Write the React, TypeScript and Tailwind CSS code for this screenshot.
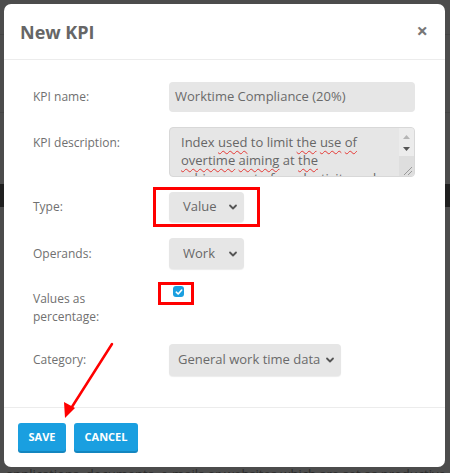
import React from "react";

const Chevron = () => (
  <svg width="10" height="10" viewBox="0 0 10 10" className="shrink-0">
    <path d="M2 3.5 L5 6.5 L8 3.5" fill="none" stroke="#555" strokeWidth="1.8" strokeLinecap="round" strokeLinejoin="round" />
  </svg>
);

const Wavy = ({ children }: { children: React.ReactNode }) => (
  <span className="underline decoration-wavy decoration-[#e53935] decoration-1 underline-offset-[3px]">{children}</span>
);

export default function App() {
  return (
    <div
      className="relative w-[450px] h-[473px] overflow-hidden bg-[#4c4c4c]"
      style={{ fontFamily: '"Open Sans", "Liberation Sans", sans-serif' }}
    >
      {/* background page hints */}
      <div className="absolute left-0 top-[34px] w-full h-px bg-[#444]" />
      <div className="absolute left-0 top-[112px] w-full h-px bg-[#444]" />
      <div className="absolute left-0 top-[184px] w-full h-[23px] bg-[#1f1f1f]" />
      <div className="absolute top-[466px] left-[6px] text-[13px] leading-[16px] text-[#2a2a2a] whitespace-nowrap">
        applications, documents, e-mails or websites which are set as productive comp
      </div>

      {/* modal */}
      <div className="absolute left-[4px] top-[4px] w-[441px] h-[463px] bg-white rounded-[7px] flex flex-col">
        <div className="h-[56px] shrink-0 flex items-center justify-between pl-[16px] pr-[17px] border-b border-[#ececec]">
          <div className="text-[18px] font-bold text-[#666] pt-[1px]">New KPI</div>
          <div className="text-[20px] font-bold text-[#777] leading-none -mt-[2px]">×</div>
        </div>

        <div className="flex-1 flex flex-col pl-[29px] text-[12px] text-[#707070]">
          {/* KPI name */}
          <div className="flex mt-[22px] h-[30px] items-center">
            <div className="w-[136px]">KPI name:</div>
            <div className="w-[246px] h-[30px] rounded-[4px] bg-[#e6e6e6] flex items-center pl-[6px] text-[13px] text-[#6a6a6a]">
              Worktime Compliance (20%)
            </div>
          </div>

          {/* KPI description */}
          <div className="flex mt-[15px]">
            <div className="w-[136px] pt-[7px]">KPI description:</div>
            <div className="relative w-[246px] h-[50px] rounded-[4px] bg-[#e6e6e6] border border-[#d8d8d8] overflow-hidden">
              <div className="pl-[11px] pr-[20px] pt-[5px] text-[13px] leading-[18px] text-[#666]">
                Index <Wavy>used</Wavy> to limit <Wavy>the</Wavy> <Wavy>use</Wavy> <Wavy>of</Wavy>
                <br />
                <Wavy>overtime</Wavy> <Wavy>aiming</Wavy> at <Wavy>the</Wavy>
                <br />
                <Wavy>achievement</Wavy> of productivity and
              </div>
              <div className="absolute right-0 top-0 w-[15px] h-full bg-[#ececec] flex flex-col items-center">
                <svg width="15" height="13" viewBox="0 0 15 13" className="mt-[2px]">
                  <path d="M4 9 L7.5 5 L11 9 Z" fill="#b5b5b5" />
                </svg>
                <svg width="15" height="13" viewBox="0 0 15 13">
                  <path d="M4 4 L7.5 8 L11 4 Z" fill="#555" />
                </svg>
                <div className="flex-1 w-full bg-[#dedede] relative">
                  <svg width="15" height="12" viewBox="0 0 15 12" className="absolute right-0 bottom-0">
                    <path d="M13 3 L5 11 M13 7 L9 11" stroke="#999" strokeWidth="1" />
                  </svg>
                </div>
              </div>
            </div>
          </div>

          {/* Type */}
          <div className="flex mt-[15px] h-[30px] items-center">
            <div className="w-[136px]">Type:</div>
            <div className="relative">
              <div className="w-[75px] h-[30px] rounded-[4px] bg-[#e6e6e6] flex items-center justify-between pl-[14px] pr-[6px] text-[13px] text-[#666] shadow-[0_1px_1px_rgba(0,0,0,0.08)]">
                <span>Value</span>
                <Chevron />
              </div>
              <div className="absolute left-[-16px] top-[-5px] w-[107px] h-[40px] border-[3px] border-[#f00]" />
            </div>
          </div>

          {/* Operands */}
          <div className="flex mt-[16px] h-[31px] items-center">
            <div className="w-[136px]">Operands:</div>
            <div className="w-[75px] h-[31px] rounded-[4px] bg-[#e6e6e6] flex items-center justify-between pl-[14px] pr-[6px] text-[13px] text-[#666] shadow-[0_1px_1px_rgba(0,0,0,0.08)]">
              <span className="w-[32px] overflow-hidden whitespace-nowrap">Work</span>
              <Chevron />
            </div>
          </div>

          {/* Values as percentage */}
          <div className="flex mt-[17px]">
            <div className="w-[136px] pt-[4px] leading-[18px]">
              Values as
              <br />
              percentage:
            </div>
            <div className="relative ml-[4px] w-[11px] h-[11px] rounded-[3px] bg-[#1a9fe0] flex items-center justify-center">
              <svg width="8" height="8" viewBox="0 0 8 8">
                <path d="M1.3 4.2 L3.2 6 L6.7 2" fill="none" stroke="white" strokeWidth="1.6" strokeLinecap="round" strokeLinejoin="round" />
              </svg>
              <div className="absolute left-[-15px] top-[-4px] w-[36px] h-[23px] border-[3px] border-[#f00]" />
            </div>
          </div>

          {/* Category */}
          <div className="flex mt-[18px] h-[32px] items-center">
            <div className="w-[136px]">Category:</div>
            <div className="w-[172px] h-[32px] rounded-[4px] bg-[#e6e6e6] flex items-center justify-between pl-[9px] pr-[6px] text-[13px] text-[#6a6a6a] shadow-[0_1px_1px_rgba(0,0,0,0.08)]">
              <span className="whitespace-nowrap">General work time data</span>
              <Chevron />
            </div>
          </div>
        </div>

        <div className="h-[60px] shrink-0 border-t border-[#ececec] flex items-start pt-[15px] pl-[14px] gap-[8px]">
          <button className="h-[28px] w-[48px] rounded-[3px] bg-[#1a9fe0] text-white text-[11px] font-bold shadow-[0_2px_0_#1486bf]">
            SAVE
          </button>
          <button className="h-[28px] w-[64px] rounded-[3px] bg-[#1a9fe0] text-white text-[11px] font-bold shadow-[0_2px_0_#1486bf]">
            CANCEL
          </button>
        </div>
      </div>

      {/* annotation arrow */}
      <svg className="absolute left-0 top-0 pointer-events-none" width="450" height="473" viewBox="0 0 450 473">
        <line x1="112" y1="344" x2="70" y2="410" stroke="#f00" strokeWidth="2.5" strokeLinecap="round" />
        <path d="M65 418 L64 402 L75 408 Z" fill="#f00" />
      </svg>
    </div>
  );
}
